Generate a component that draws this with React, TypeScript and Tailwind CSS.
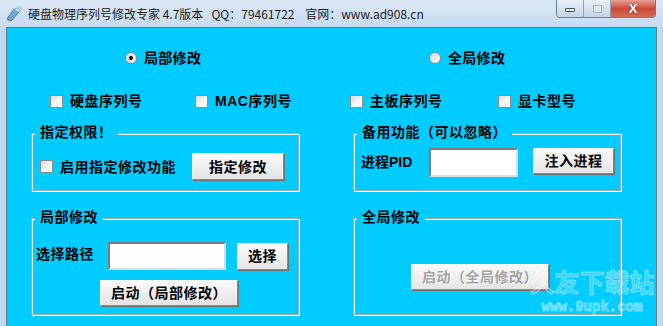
import React from "react";

const cjk = "font-['Liberation_Sans','Noto_Sans_CJK_SC',sans-serif]";

function Radio({ checked, label }: { checked?: boolean; label: string }) {
  return (
    <div className="flex h-[20px] items-center gap-[7px]">
      <span className="flex h-[12px] w-[12px] items-center justify-center rounded-full border border-[#8a8c8e] bg-gradient-to-br from-[#d6d6d6] to-white">
        {checked && <span className="h-[4px] w-[4px] rounded-full bg-black" />}
      </span>
      <span className="text-[14px] font-bold leading-[20px] tracking-[0.3px] text-black">{label}</span>
    </div>
  );
}

function Check({ label, width }: { label: string; width?: string }) {
  return (
    <div className={`flex h-[20px] items-center gap-[7px] ${width ?? ""}`}>
      <span className="h-[13px] w-[13px] shrink-0 border border-[#8a8c8e] bg-gradient-to-br from-[#d8d8d8] via-[#f4f4f4] to-white" />
      <span className="whitespace-nowrap text-[14px] font-bold leading-[20px] tracking-[0.5px] text-black">
        {label}
      </span>
    </div>
  );
}

function Btn({ label, className, disabled }: { label: string; className: string; disabled?: boolean }) {
  return (
    <button
      className={`flex shrink-0 items-center justify-center border border-[#fdfdfd] border-r-[#8a8a8a] border-b-[#8a8a8a] bg-gradient-to-b from-[#fafafa] to-[#e4e4e4] text-[14px] font-bold leading-none tracking-[0.5px] shadow-[1px_1px_0_#6e6e6e] ${
        disabled ? "text-[#a3a3a3] [text-shadow:1px_1px_0_#fff]" : "text-black"
      } ${className}`}
    >
      {label}
    </button>
  );
}

function Field({ className }: { className: string }) {
  return (
    <div
      className={`shrink-0 border-2 border-[#7c7c7c] border-r-[#dcdcdc] border-b-[#dcdcdc] bg-white ${className}`}
    />
  );
}

function Group({ title, className, children }: { title: string; className: string; children?: React.ReactNode }) {
  return (
    <div
      className={`border border-[#a8a8a8] shadow-[inset_1px_1px_0_#fff,1px_1px_0_#fff] ${className}`}
    >
      <div className="-mt-[10px] ml-[3px] h-[16px] w-fit bg-[#00ccff] px-[5px] text-[14px] font-bold leading-[16px] tracking-[0.5px] text-black">
        {title}
      </div>
      {children}
    </div>
  );
}

function AppIcon() {
  return (
    <svg width="18" height="16" viewBox="0 0 18 16">
      <path d="M2 13 L9 3 L14 3 L14 6 L6 15 Z" fill="#6fa8dc" stroke="#2f5f96" strokeWidth="0.8" />
      <path d="M9 3 L14 3 L14 6 Z" fill="#dfefff" />
      <path d="M2 13 L4 14.5 L6 15 L3 15.5 Z" fill="#f08a24" />
      <path d="M11 1 L16 1 L16 5" fill="none" stroke="#9cc6ee" strokeWidth="1.2" />
    </svg>
  );
}

export default function App() {
  return (
    <div className={`flex h-[326px] w-[663px] flex-col overflow-hidden bg-[#c4d9f0] ${cjk}`}>
      {/* title bar */}
      <div className="flex h-[27px] shrink-0 items-start bg-gradient-to-b from-[#dce8f6] to-[#c7dbf1]">
        <div className="flex h-[27px] items-center pl-[5px]">
          <AppIcon />
          <span className="ml-[5px] whitespace-pre font-['Noto_Sans_CJK_SC',sans-serif] text-[12px] leading-none text-[#1b1b1b]">
            {"硬盘物理序列号修改专家 4.7版本   QQ：79461722    官网：www.ad908.cn"}
          </span>
        </div>
        <div className="ml-auto mr-[7px] flex h-[18px] overflow-hidden rounded-b-[4px] border border-t-0 border-[#6b7f98]">
          <div className="flex w-[27px] items-center justify-center border-r border-[#8fa3ba] bg-gradient-to-b from-[#e9f0f8] to-[#c3d3e6]">
            <span className="mt-[3px] h-[4px] w-[10px] rounded-[1px] border border-[#3e4f66] bg-white" />
          </div>
          <div className="flex w-[27px] items-center justify-center border-r border-[#8fa3ba] bg-gradient-to-b from-[#e9f0f8] to-[#c3d3e6]">
            <span className="h-[8px] w-[9px] border border-[#a9b5c4] bg-[#dfe6ee]" />
          </div>
          <div className="flex w-[44px] items-center justify-center bg-gradient-to-b from-[#e8a093] via-[#c94b3a] to-[#d66a52]">
            <span className="text-[13px] font-bold leading-none text-white [text-shadow:0_0_2px_#5a1a10]">X</span>
          </div>
        </div>
      </div>

      {/* client area */}
      <div className="relative mx-[6px] flex-1 border-x border-t border-[#66778a] bg-[#00ccff]">
        <div className="flex gap-[54px] pl-[24px]">
          {/* left column */}
          <div className="w-[268px] shrink-0">
            <div className="mt-[20px] pl-[94px]">
              <Radio checked label="局部修改" />
            </div>
            <div className="mt-[23px] flex pl-[19px]">
              <Check label="硬盘序列号" width="w-[145px]" />
              <Check label="MAC序列号" />
            </div>
            <Group title="指定权限！" className="mt-[22px] h-[58px]">
              <div className="mt-[13px] flex items-center pl-[8px]">
                <Check label="启用指定修改功能" />
                <Btn label="指定修改" className="ml-[16px] h-[27px] w-[92px]" />
              </div>
            </Group>
            <Group title="局部修改" className="mt-[27px] h-[97px]">
              <div className="mt-[17px] flex items-center pl-[4px]">
                <span className="mb-[4px] w-[72px] text-[14px] font-bold leading-[20px] tracking-[0.5px] text-black">
                  选择路径
                </span>
                <Field className="h-[28px] w-[118px]" />
                <Btn label="选择" className="ml-[11px] h-[27px] w-[51px]" />
              </div>
              <Btn label="启动（局部修改）" className="ml-[68px] mt-[10px] h-[26px] w-[138px]" />
            </Group>
          </div>

          {/* right column */}
          <div className="w-[268px] shrink-0">
            <div className="mt-[20px] pl-[76px]">
              <Radio label="全局修改" />
            </div>
            <div className="-ml-[3px] mt-[23px] flex">
              <Check label="主板序列号" width="w-[148px]" />
              <Check label="显卡型号" />
            </div>
            <Group title="备用功能（可以忽略）" className="mt-[22px] h-[58px]">
              <div className="mt-[8px] flex items-start pl-[7px]">
                <span className="mt-[4px] w-[68px] text-[14px] font-bold leading-[20px] text-black">进程PID</span>
                <Field className="h-[29px] w-[89px]" />
                <Btn label="注入进程" className="ml-[15px] h-[26px] w-[81px]" />
              </div>
            </Group>
            <Group title="全局修改" className="mt-[27px] h-[97px]">
              <Btn label="启动（全局修改）" disabled className="ml-[57px] mt-[39px] h-[26px] w-[138px]" />
            </Group>
          </div>
        </div>

        {/* watermark */}
        <div className="pointer-events-none absolute left-[520px] top-[243px] flex w-[130px] flex-col items-center whitespace-nowrap leading-none">
          <span className="text-[25px] font-bold text-white/20 [-webkit-text-stroke:1px_rgba(255,255,255,0.4)]">
            久友下载站
          </span>
          <span className="mt-[4px] font-['Liberation_Mono',monospace] text-[14px] font-bold text-white/20 [-webkit-text-stroke:1px_rgba(255,255,255,0.4)]">
            www.9upk.com
          </span>
        </div>
      </div>
    </div>
  );
}
